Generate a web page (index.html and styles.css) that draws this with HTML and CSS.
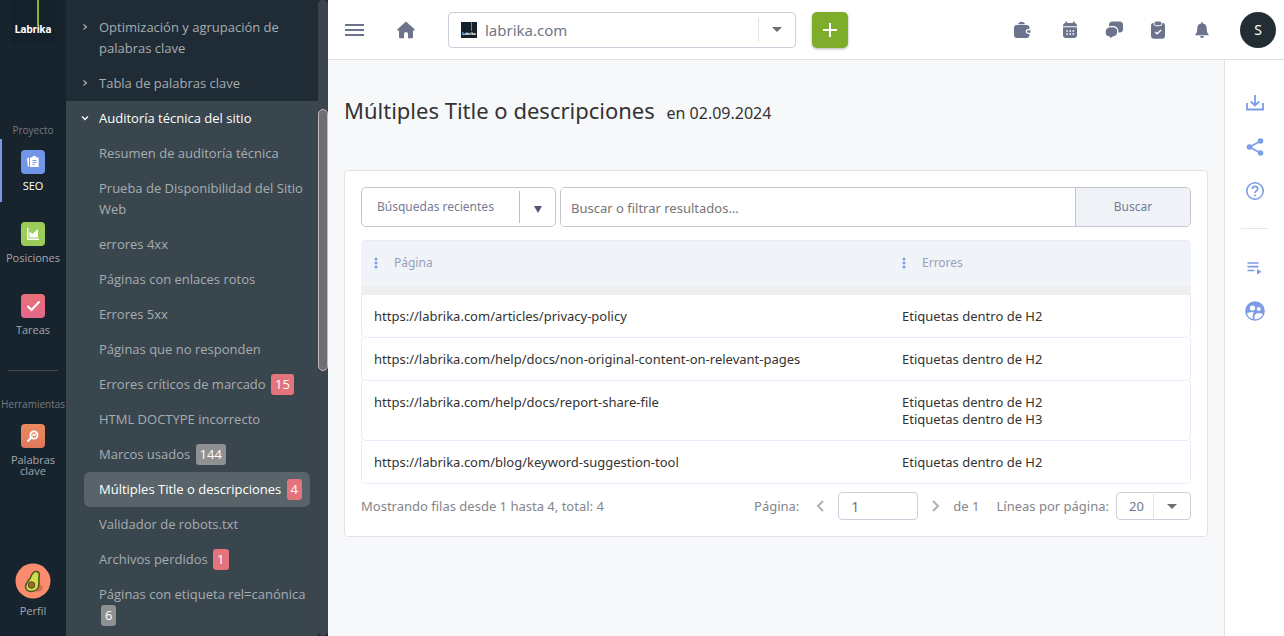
FILE: index.html
```html
<!DOCTYPE html>
<html lang="es">
<head>
<meta charset="utf-8">
<meta name="viewport" content="width=device-width, initial-scale=1">
<title>Labrika</title>
<link rel="stylesheet" href="styles.css">
</head>
<body>
<div class="app">
  <aside class="rail">
    <a class="logo" href="#"><span class="logo-line"></span><span class="logo-text">Labrika</span></a>
    <p class="rail-heading rail-heading-first">Proyecto</p>
    <nav class="rail-nav">
      <a class="rail-item rail-item-active" href="#">
        <span class="tile tile-blue"><svg viewBox="0 0 24 24" width="24" height="24"><path fill="#fff" d="M9 7.500h2L12 6h2.500l1 1.500h2.200V17H9zM6 8.500l2-1v9.300l-1.200-.4z"/><path fill="none" stroke="#7b97e8" d="M11.500 10.500h4M11.500 12.500h4M11.500 14.500h2"/></svg></span>
        SEO</a>
      <a class="rail-item" href="#">
        <span class="tile tile-green"><svg viewBox="0 0 24 24" width="24" height="24"><path fill="#fff" d="M6 6h1.500v10.500H18V18H6zM8.500 15.500V9.500l3 2.500 5.500-5v8.500z"/></svg></span>
        Posiciones</a>
      <a class="rail-item" href="#">
        <span class="tile tile-red"><svg viewBox="0 0 24 24" width="24" height="24"><path fill="none" stroke="#fff" stroke-width="2" d="M6.500 12l4 4 8-8.500"/></svg></span>
        Tareas</a>
    </nav>
    <hr class="rail-rule">
    <p class="rail-heading">Herramientas</p>
    <a class="rail-item rail-item-tool" href="#">
      <span class="tile tile-orange"><svg viewBox="0 0 24 24" width="24" height="24"><circle cx="13" cy="11" r="3.600" fill="none" stroke="#fff" stroke-width="1.800"/><path fill="none" stroke="#fff" stroke-width="2" d="M10.200 13.500l-3.700 4"/><path fill="none" stroke="#fff" stroke-width="1.200" d="M11 12.500l1.500-2.500 1.300 1.500 1.700-2.500"/></svg></span>
      Palabras clave</a>
    <a class="profile" href="#">
      <svg viewBox="0 0 36 36" width="36" height="36"><circle cx="18" cy="18" r="17.500" fill="#fb8c6e"/><ellipse cx="23" cy="25" rx="5" ry="3.500" fill="#d87058"/><path d="M21.500 8.500c-3-.6-4.600 2.200-6 6-1.300 3-5 5.200-5 9 0 3 2.600 5 6 5 4.600 0 7.500-3.200 7.500-8 0-3.500-.3-5.200.2-7.600.4-2.400-.5-4-2.700-4.400z" fill="#cfdd4d" stroke="#49591d" stroke-width="1.600"/><circle cx="16.500" cy="22" r="3.300" fill="#986b2b" stroke="#5d461c" stroke-width="1"/></svg>
      Perfil</a>
  </aside>

  <aside class="menu">
    <div class="menu-scroll">
      <ul class="menu-list menu-top">
        <li><a class="menu-link menu-group" href="#"><svg class="caret" viewBox="0 0 8 8" width="8" height="8"><path d="M2.500 1.500L5.500 4 2.500 6.500"/></svg>Optimización y agrupación de palabras clave</a></li>
        <li><a class="menu-link menu-group" href="#"><svg class="caret" viewBox="0 0 8 8" width="8" height="8"><path d="M2.500 1.500L5.500 4 2.500 6.500"/></svg>Tabla de palabras clave</a></li>
      </ul>
      <ul class="menu-list menu-open">
        <li><a class="menu-link menu-group menu-group-open" href="#"><svg class="caret" viewBox="0 0 8 8" width="8" height="8"><path d="M1 2.500L4 5.500 7 2.500"/></svg>Auditoría técnica del sitio</a></li>
        <li><a class="menu-link" href="#">Resumen de auditoría técnica</a></li>
        <li><a class="menu-link" href="#">Prueba de Disponibilidad del Sitio Web</a></li>
        <li><a class="menu-link" href="#">errores 4xx</a></li>
        <li><a class="menu-link" href="#">Páginas con enlaces rotos</a></li>
        <li><a class="menu-link" href="#">Errores 5xx</a></li>
        <li><a class="menu-link" href="#">Páginas que no responden</a></li>
        <li><a class="menu-link" href="#">Errores críticos de marcado <span class="badge">15</span></a></li>
        <li><a class="menu-link" href="#">HTML DOCTYPE incorrecto</a></li>
        <li><a class="menu-link" href="#">Marcos usados <span class="badge badge-grey">144</span></a></li>
        <li><a class="menu-link menu-link-active" href="#">Múltiples Title o descripciones <span class="badge">4</span></a></li>
        <li><a class="menu-link" href="#">Validador de robots.txt</a></li>
        <li><a class="menu-link" href="#">Archivos perdidos <span class="badge">1</span></a></li>
        <li><a class="menu-link" href="#">Páginas con etiqueta rel=canónica <span class="badge badge-grey">6</span></a></li>
      </ul>
    </div>
    <div class="track"><div class="thumb"></div></div>
  </aside>

  <div class="page">
    <header class="topbar">
      <button class="icon-button menu-toggle" type="button" aria-label="Menú"><svg viewBox="0 0 20 14" width="20" height="14"><path fill="none" stroke="#6b748c" stroke-width="2" d="M1 2h19M1 7h19M1 12h19"/></svg></button>
      <a class="home" href="#" aria-label="Inicio"><svg viewBox="0 0 20 20" width="20" height="20"><path fill="#6b748c" d="M10 1.500l8.600 7.800c.5.500.2 1.200-.5 1.200H17v6.500c0 .8-.6 1.300-1.300 1.300H12V14a2 2 0 0 0-4 0v4.300H4.300c-.7 0-1.300-.5-1.300-1.300v-6.500H1.900c-.7 0-1-.7-.5-1.200z"/></svg></a>
      <div class="site-select">
        <span class="favicon"><span class="favicon-line"></span><span class="favicon-text">Labrika</span></span>
        <select class="site-value" aria-label="Proyecto"><option>labrika.com</option></select>
        <span class="select-arrow site-arrow"><svg viewBox="0 0 10 5" width="10" height="5"><path fill="#6f6f6f" d="M0 0h10L5 5z"/></svg></span>
      </div>
      <button class="add-button" type="button" aria-label="Añadir"><svg viewBox="0 0 14 14" width="14" height="14"><path stroke="#fff" stroke-width="2" d="M7 0v14M0 7h14"/></svg></button>
      <div class="topbar-icons">
        <button class="icon-button icon-wallet" type="button" aria-label="Cartera"><svg viewBox="0 0 20 20" width="20" height="20"><path fill="#6b748c" d="M6 4.200C6.500 2.600 7.500 2 9.500 2s3 .6 3.500 2.200zM5 5h9.500a3 3 0 0 1 3 3v1h-1.300a2.500 2.500 0 0 0 0 5h1.300v1a3 3 0 0 1-3 3H5a3 3 0 0 1-3-3V8a3 3 0 0 1 3-3zM16.300 10.200H18.500v2.600h-2.200a1.300 1.300 0 0 1 0-2.600z"/></svg></button>
        <button class="icon-button" type="button" aria-label="Calendario"><svg viewBox="0 0 20 20" width="20" height="20"><path fill="#6b748c" d="M5.500 1.500h1.600V3h5.800V1.500h1.600V3a2.500 2.500 0 0 1 2.500 2.500v.7H3v-.7A2.500 2.500 0 0 1 5.500 3zM3 7.300h14V15a3 3 0 0 1-3 3H6a3 3 0 0 1-3-3z"/><path stroke="#fff" stroke-width="1.600" stroke-dasharray="1.600 1.500" d="M6.300 11h7.800M6.300 14h7.800"/></svg></button>
        <button class="icon-button" type="button" aria-label="Mensajes"><svg viewBox="0 0 20 20" width="20" height="20"><rect x="5" y="1.500" width="14" height="11" rx="3.500" fill="#6b748c"/><path fill="#6b748c" stroke="#fff" stroke-width="1.200" d="M7 6.600h1.500c3.300 0 5.300 2.200 5.300 5s-2 5.200-5 5.400l-2.700 2.200-.7-2.200C2.600 16.700 1 14.800 1 12.200c0-3.500 2.700-5.600 6-5.600z"/></svg></button>
        <button class="icon-button" type="button" aria-label="Tareas"><svg viewBox="0 0 20 20" width="20" height="20"><rect x="3" y="2.700" width="14" height="16" rx="3" fill="#6b748c"/><rect x="6" y="1" width="8" height="4.700" rx="2.300" fill="#6b748c" stroke="#fff"/><path fill="none" stroke="#fff" stroke-width="1.500" d="M7.300 12l1.800 1.800 4-3.800"/></svg></button>
        <button class="icon-button" type="button" aria-label="Notificaciones"><svg viewBox="0 0 20 20" width="20" height="20"><path fill="#6b748c" d="M9.200 2.200h1.600v1.300c2.500.4 3.900 2.200 3.900 4.500 0 3.800.5 5 1.800 6.300v.9H3.500v-.9C4.800 13 5.300 11.800 5.300 8c0-2.300 1.400-4.100 3.900-4.500zM8 16h4a2 2 0 0 1-4 0z"/></svg></button>
      </div>
      <button class="avatar" type="button">S</button>
    </header>

    <div class="body">
      <main class="content">
        <h1 class="title">Múltiples Title o descripciones <small class="title-date">en 02.09.2024</small></h1>
        <section class="card">
          <form class="search">
            <button class="recent" type="button"><span class="recent-label">Búsquedas recientes</span><span class="recent-arrow"><svg viewBox="0 0 8 7" width="8" height="7"><path fill="#4d5778" d="M0 0h8L4 7z"/></svg></span></button>
            <div class="search-box">
              <input class="search-input" type="text" placeholder="Buscar o filtrar resultados..." aria-label="Buscar o filtrar resultados">
              <button class="search-button" type="button">Buscar</button>
            </div>
          </form>
          <table class="results">
            <thead>
              <tr>
                <th class="col-page" scope="col"><span class="head"><svg class="dots" viewBox="0 0 4 12" width="4" height="12"><circle cx="2" cy="2" r="1.500"/><circle cx="2" cy="6" r="1.500"/><circle cx="2" cy="10" r="1.500"/></svg>Página</span></th>
                <th scope="col"><span class="head"><svg class="dots" viewBox="0 0 4 12" width="4" height="12"><circle cx="2" cy="2" r="1.500"/><circle cx="2" cy="6" r="1.500"/><circle cx="2" cy="10" r="1.500"/></svg>Errores</span></th>
              </tr>
            </thead>
            <tbody>
              <tr><td>https://labrika.com/articles/privacy-policy</td><td>Etiquetas dentro de H2</td></tr>
              <tr><td>https://labrika.com/help/docs/non-original-content-on-relevant-pages</td><td>Etiquetas dentro de H2</td></tr>
              <tr><td>https://labrika.com/help/docs/report-share-file</td><td>Etiquetas dentro de H2<br>Etiquetas dentro de H3</td></tr>
              <tr><td>https://labrika.com/blog/keyword-suggestion-tool</td><td>Etiquetas dentro de H2</td></tr>
            </tbody>
          </table>
          <footer class="pager">
            <p class="pager-info">Mostrando filas desde 1 hasta 4, total: 4</p>
            <label for="page-number">Página:</label>
            <button class="step step-prev" type="button" aria-label="Anterior"><svg viewBox="0 0 8 12" width="8" height="12"><path d="M7 1L2 6l5 5"/></svg></button>
            <input class="page-number" id="page-number" type="text" value="1">
            <button class="step step-next" type="button" aria-label="Siguiente"><svg viewBox="0 0 8 12" width="8" height="12"><path d="M1 1l5 5-5 5"/></svg></button>
            <span class="page-total">de 1</span>
            <label class="lines-label" for="lines">Líneas por página:</label>
            <span class="lines">
              <select class="lines-value" id="lines"><option>20</option></select>
              <span class="select-arrow"><svg viewBox="0 0 10 5" width="10" height="5"><path fill="#6f6f6f" d="M0 0h10L5 5z"/></svg></span>
            </span>
          </footer>
        </section>
      </main>

      <aside class="tools">
        <button class="icon-button" type="button" aria-label="Descargar"><svg class="tool" viewBox="0 0 20 20" width="20" height="20"><path stroke-width="1.800" d="M10 2v10M5.800 8.500L10 12.500l4.200-4M2 10v6.500h16V10"/></svg></button>
        <button class="icon-button" type="button" aria-label="Compartir"><svg class="tool" viewBox="0 0 20 20" width="20" height="20"><path stroke-width="1.600" d="M15.500 4L4.500 10l11 6"/><g fill="#7b9ce6" stroke="none"><circle cx="15.500" cy="4" r="2.800"/><circle cx="4.500" cy="10" r="2.800"/><circle cx="15.500" cy="16" r="2.800"/></g></svg></button>
        <button class="icon-button" type="button" aria-label="Ayuda"><svg class="tool" viewBox="0 0 20 20" width="20" height="20"><circle cx="10" cy="10" r="8.200" stroke-width="1.600"/><path stroke-width="1.700" d="M7.300 8c0-1.700 1.200-2.600 2.700-2.600s2.700 1 2.700 2.400c0 2-2.700 2.200-2.700 4.200M10 13.500v1.700"/></svg></button>
        <hr class="tools-rule">
        <button class="icon-button" type="button" aria-label="Lista"><svg class="tool" viewBox="0 0 20 20" width="20" height="20"><path stroke-width="1.700" d="M2.500 6h11M2.500 9.700h11M2.500 13.500h7"/><path fill="#7b9ce6" stroke="none" d="M12 12l4.500 2.700L12 17.500z"/></svg></button>
        <button class="icon-button" type="button" aria-label="Equipo"><svg viewBox="0 0 20 20" width="20" height="20"><circle cx="10" cy="10" r="9.800" fill="#7b9ce6"/><g fill="#fff"><circle cx="7.500" cy="7" r="2.600"/><circle cx="13.800" cy="8" r="2"/><path d="M2 12.500c1.500-1.300 4.500-1.700 7-1-1.300 1.500-1.500 4-1.300 6.400C4.800 17.300 2.700 15.200 2 12.500zM9.500 18.300c-.3-4.300.7-6 4.300-6 1.800 0 3 .3 4.100.9-1.300 3.100-4.500 5.300-8.400 5.100z"/></g></svg></button>
      </aside>
    </div>
  </div>
</div>
</body>
</html>
```

FILE: styles.css
```css
* { box-sizing: border-box; }

body {
  margin: 0;
  font-family: "Noto Sans", "Open Sans", sans-serif;
  font-size: 13px;
  color: #333;
  background: #f7f8fa;
}

a { color: inherit; text-decoration: none; }
button, input, select { font: inherit; color: inherit; margin: 0; }
button { border: 0; padding: 0; background: none; cursor: pointer; }
select { appearance: none; border: 0; background: none; outline: 0; }
svg { display: block; }
p, ul { margin: 0; padding: 0; list-style: none; }
hr { border: 0; margin: 0; }

.app { display: flex; height: 100vh; }

/* Left rail */
.rail {
  display: flex;
  flex-direction: column;
  width: 66px;
  flex: none;
  padding-bottom: 20px;
  background: #17232d;
  color: #a3a8ac;
  font-family: "Open Sans", sans-serif;
  font-size: 11px;
  line-height: 11px;
  text-align: center;
}
.logo {
  display: grid;
  width: 44px;
  height: 44px;
  margin: 0 auto;
  background: #14202a;
}
.logo > * { grid-area: 1 / 1; }
.logo-line { justify-self: center; width: 2px; height: 25px; margin-left: 10px; background: #85b42a; }
.logo-text {
  place-self: center;
  margin-top: 16px;
  font: bold 11px/14px Roboto, sans-serif;
  color: #fff;
}
.rail-heading { color: #767b80; font-size: 10px; white-space: nowrap; }
.rail-heading-first { margin: 81px 0 3px; }
.rail-nav { display: flex; flex-direction: column; gap: 9px; }
.rail-item {
  display: flex;
  flex-direction: column;
  align-items: center;
  gap: 6px;
  height: 63px;
  padding-top: 11px;
  border-left: 2px solid transparent;
  border-right: 2px solid transparent;
}
.rail-item-active { border-left-color: #7b97e8; color: #fff; }
.tile { border-radius: 4px; }
.tile-blue { background: #7196e8; }
.tile-green { background: #9bcb58; }
.tile-red { background: linear-gradient(#e97078, #e5678c); }
.tile-orange { background: linear-gradient(#e98b5c, #e0775c); }
.rail-rule { height: 1px; margin: 24px 8px 28px; background: #4b4950; }
.rail-item-tool { padding-top: 14px; height: auto; }
.profile {
  display: flex;
  flex-direction: column;
  align-items: center;
  gap: 6px;
  margin-top: auto;
}

/* Section menu */
.menu {
  display: flex;
  width: 262px;
  flex: none;
  background: #202c35;
  color: #a6adb1;
  font-family: "Open Sans", sans-serif;
  line-height: 21px;
}
.menu-scroll { flex: 1; overflow: hidden; }
.menu-list { padding: 0 8px 0 18px; }
.menu-top { padding-top: 10px; }
.menu-open { min-height: 100%; background: #3a464e; }
.menu-link { display: block; padding: 7px 4px 7px 15px; border-radius: 6px; }
.menu-group { position: relative; }
.menu-group-open { color: #fff; }
.menu-link-active { background: #59646a; color: #fff; }
.caret {
  position: absolute;
  left: -3px;
  top: 13px;
  fill: none;
  stroke: currentColor;
  stroke-width: 1.3;
}
.badge {
  display: inline-block;
  margin-left: 2px;
  padding: 0 4px;
  border-radius: 3px;
  background: #e5737b;
  color: #fff;
}
.badge-grey { background: #8f9091; }
.track { width: 10px; padding-top: 109px; border-radius: 5px; background: #3b444c; }
.thumb { height: 262px; border: 1px solid #c5b9ba; border-radius: 5px; background: #6f6e72; }

/* Top bar */
.page { display: flex; flex: 1; min-width: 0; flex-direction: column; }
.topbar {
  display: flex;
  align-items: center;
  height: 60px;
  padding: 0 8px 0 16px;
  border-bottom: 1px solid #e2dfe2;
  background: #fff;
}
.icon-button { display: grid; place-items: center; }
.home { margin-left: 32px; }
.site-select {
  display: flex;
  align-items: center;
  width: 348px;
  height: 36px;
  margin: 0 16px 0 32px;
  padding-left: 12px;
  border: 1px solid #cfcedd;
  border-radius: 4px;
}
.favicon { display: grid; width: 16px; height: 16px; background: #14202a; }
.favicon > * { grid-area: 1 / 1; }
.favicon-line { width: 1px; height: 9px; margin-left: 10px; background: #6b9a24; }
.favicon-text { place-self: end center; font: bold 4px/8px Roboto, sans-serif; color: #fff; }
.site-value { flex: 1; height: 34px; padding: 0 8px; font-size: 15px; color: #6e7789; }
.select-arrow { display: grid; place-items: center; width: 37px; height: 24px; border-left: 1px solid #e3e1e8; }
.add-button {
  display: grid;
  place-items: center;
  width: 36px;
  height: 36px;
  border-radius: 5px;
  background: #7ead2b;
  box-shadow: 0 1px 3px rgba(0, 0, 0, .3);
}
.topbar-icons { display: flex; gap: 24px; margin-left: auto; }
.icon-wallet { margin-right: 4px; }
.avatar {
  width: 36px;
  height: 36px;
  margin-left: 28px;
  border-radius: 50%;
  background: #222e33;
  color: #fff;
  font-size: 14px;
}

/* Main area */
.body { display: flex; flex: 1; }
.content { flex: 1; min-width: 0; padding: 34px 16px; }
.title { margin: 0 0 44px; font-size: 22px; line-height: 32px; font-weight: 400; }
.title-date { margin-left: 6px; font-size: 16px; line-height: 16px; }
.card { padding: 16px; border: 1px solid #e5e1e6; border-radius: 4px; background: #fff; }

.search { display: flex; gap: 4px; height: 40px; }
.recent {
  display: flex;
  align-items: center;
  width: 195px;
  padding-left: 15px;
  border: 1px solid #c4c4cc;
  border-radius: 5px;
  color: #747d98;
  font-size: 12px;
}
.recent-label { flex: 1; padding-bottom: 2px; text-align: left; }
.recent-arrow { display: grid; place-items: center; width: 36px; height: 32px; padding-top: 4px; border-left: 1px solid #bdbdc6; }
.search-box { display: flex; flex: 1; border: 1px solid #c4c4cc; border-radius: 5px; overflow: hidden; }
.search-input { flex: 1; min-width: 0; border: 0; padding: 2px 10px 0; outline: 0; }
.search-input::placeholder { color: #757575; opacity: 1; }
.search-button {
  width: 115px;
  padding-bottom: 2px;
  border-left: 1px solid #c4c4cc;
  background: #eff2f6;
  color: #747d98;
  font-size: 12px;
}

.results {
  width: 100%;
  margin-top: 13px;
  border-spacing: 0;
  table-layout: fixed;
  line-height: 17px;
}
.results th {
  height: 55px;
  padding: 0 12px;
  border-top: 1px solid #e6edf8;
  border-bottom: 9px solid #efeff0;
  background: #f0f3f8;
  color: #98a0bb;
  font-size: 12px;
  font-weight: 400;
  text-align: left;
}
.results .col-page { width: 529px; padding-left: 13px; }
.results th:first-child { border-top-left-radius: 5px; }
.results th:last-child { border-top-right-radius: 5px; }
.head { display: flex; align-items: center; gap: 16px; padding-bottom: 2px; }
.dots { fill: #7b9ce6; }
.results td {
  padding: 13px 12px 12px;
  border-bottom: 1px solid #e4edf9;
  vertical-align: top;
  overflow-wrap: anywhere;
}
.results td:first-child { border-left: 1px solid #e4edf9; border-bottom-left-radius: 5px; }
.results td:last-child { border-right: 1px solid #e4edf9; border-bottom-right-radius: 5px; }

.pager { display: flex; align-items: center; margin-top: 8px; color: #84868a; }
.pager-info { flex: 1; }
.step { padding: 8px; }
.step path { fill: none; stroke: #b0b0b0; stroke-width: 2; }
.step-prev { margin: 0 6px 0 9px; }
.step-next { margin: 0 5px 0 6px; }
.page-number {
  width: 80px;
  height: 28px;
  padding: 0 12px;
  border: 1px solid #cfcedd;
  border-radius: 4px;
  font-size: 14px;
  color: #6e7789;
}
.lines-label { margin: 0 7px 0 17px; }
.lines {
  display: flex;
  align-items: center;
  width: 75px;
  height: 28px;
  border: 1px solid #cfcedd;
  border-radius: 4px;
}
.lines-value { flex: 1; min-width: 0; padding: 0 0 0 12px; color: #6e7789; }

/* Right tools */
.tools {
  display: flex;
  flex-direction: column;
  align-items: center;
  gap: 24px;
  width: 60px;
  padding-top: 33px;
  border-left: 1px solid #e2dfe2;
  background: #fff;
}
.tool { fill: none; stroke: #7b9ce6; }
.tools-rule { width: 27px; height: 1px; margin: 3px 0 4px; background: #e6e6ea; }
```
